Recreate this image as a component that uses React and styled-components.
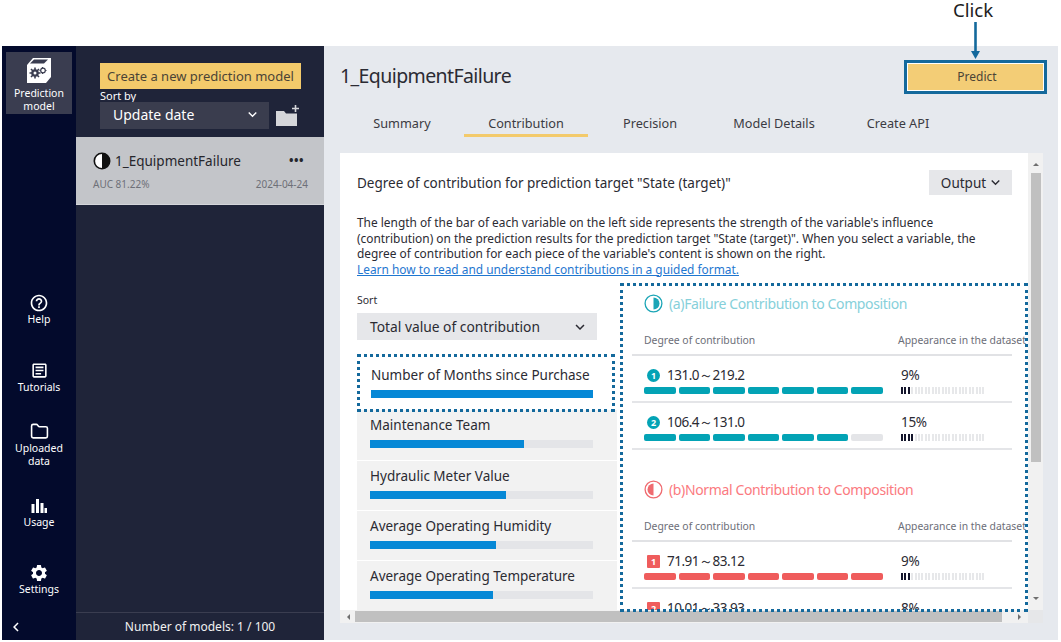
import React from 'react';
import styled, { createGlobalStyle } from 'styled-components';
import { MdHelpOutline, MdOutlineArticle, MdSettings, MdExpandMore, MdChevronLeft } from 'react-icons/md';
import { LuFolder } from 'react-icons/lu';

const Global = createGlobalStyle`
  html, body { margin: 0; padding: 0; background: #fff; }
  body { font-family: "Noto Sans", "Open Sans", sans-serif; color: #2b2b33; }
  * { box-sizing: border-box; }
`;

const Page = styled.div`
  position: relative;
  width: 1061px;
  height: 642px;
  padding: 46px 3px 2px 2px;
  overflow: hidden;
`;

const Shell = styled.div`
  display: flex;
  height: 100%;
`;

const Rail = styled.nav`
  width: 74px;
  flex: none;
  background: #030a2c;
  padding-top: 6px;
  display: flex;
  flex-direction: column;
  align-items: center;
`;

const RailItem = styled.div`
  width: 66px;
  display: flex;
  flex-direction: column;
  align-items: center;
  color: #fff;
  font-size: 10.5px;
  line-height: 13px;
  text-align: center;
  margin-top: ${p => p.$top || 0}px;
  background: ${p => (p.$active ? '#3a3d50' : 'transparent')};
  padding: ${p => (p.$active ? '5px 0 1px' : '0')};
  svg { display: block; }
`;

const RailIconGap = styled.span`
  display: block;
  margin-top: ${p => p.$gap || 0}px;
`;

const RailBack = styled.div`
  margin-top: auto;
  width: 100%;
  height: 26px;
  padding-left: 5px;
  color: #fff;
  display: flex;
  align-items: center;
`;

const Sidebar = styled.aside`
  width: 248px;
  flex: none;
  background: #1f2439;
  display: flex;
  flex-direction: column;
`;

const SideTop = styled.div`
  height: 91px;
  padding: 17px 0 0 24px;
`;

const CreateButton = styled.div`
  width: 201px;
  height: 26px;
  background: #f3ca6b;
  color: #4b4436;
  font-size: 13px;
  line-height: 26px;
  text-align: center;
`;

const SortLabel = styled.div`
  color: #fff;
  font-size: 11px;
  line-height: 13px;
`;

const SortRow = styled.div`
  display: flex;
  align-items: center;
  gap: 7px;
`;

const DarkSelect = styled.div`
  width: 169px;
  height: 27px;
  background: #3a3d4e;
  color: #fff;
  font-size: 14px;
  padding: 0 8px 2px 13px;
  display: flex;
  align-items: center;
  justify-content: space-between;
`;

const ModelCard = styled.div`
  height: 68px;
  background: #c3c5c9;
  padding: 13px 16px 0 17px;
  border-bottom: 1px solid #d4d6da;
`;

const ModelRow = styled.div`
  display: flex;
  align-items: center;
  justify-content: space-between;
  font-size: 13.5px;
  line-height: 22px;
  color: #26262c;
  padding-right: 4px;
`;

const ModelName = styled.div`
  display: flex;
  align-items: center;
  gap: 4px;
`;

const Dots = styled.div`
  font-weight: 700;
  font-size: 12px;
  letter-spacing: 0.5px;
  line-height: 14px;
`;

const ModelMeta = styled.div`
  display: flex;
  justify-content: space-between;
  font-size: 10px;
  color: #6e7078;
  margin-top: 5px;
`;

const SideSpace = styled.div`
  flex: 1;
`;

const SideFooter = styled.div`
  height: 28px;
  border-top: 1px solid #3a3d50;
  color: #f1f1f1;
  font-size: 12px;
  line-height: 27px;
  text-align: center;
`;

const Main = styled.main`
  flex: 1;
  background: #e6e9ee;
  padding: 0 0 0 16px;
  min-width: 0;
  display: flex;
  flex-direction: column;
`;

const MainHead = styled.div`
  height: 60px;
  display: flex;
  align-items: center;
  justify-content: space-between;
  padding-right: 11px;
`;

const Title = styled.h1`
  margin: 0 0 2px;
  font-size: 19.5px;
  letter-spacing: -0.6px;
  font-weight: 400;
  color: #2b2b33;
`;

const PredictButton = styled.div`
  width: 143px;
  height: 34px;
  margin-top: 1px;
  background: #f3cd76;
  border: 3px solid #14699c;
  box-shadow: inset 0 0 0 1px #fff;
  color: #4b4436;
  font-size: 12px;
  line-height: 28px;
  text-align: center;
  padding-left: 3px;
`;

const Tabs = styled.div`
  display: flex;
  height: 47px;
  padding-top: 8px;
`;

const Tab = styled.div`
  width: 124px;
  height: 23px;
  text-align: center;
  font-size: 12.7px;
  line-height: 19px;
  color: #3b3b42;
  border-bottom: 3px solid ${p => (p.$active ? '#f3ca6b' : 'transparent')};
`;

const Panel = styled.div`
  display: grid;
  grid-template-columns: 688px 15px;
  grid-template-rows: 457px 13px;
`;

const Content = styled.div`
  background: #fff;
  overflow: hidden;
  padding: 17px 16px 0 17px;
`;

const HeadRow = styled.div`
  display: flex;
  align-items: center;
  justify-content: space-between;
  height: 25px;
`;

const PanelTitle = styled.div`
  font-size: 13.5px;
  color: #2b2b33;
`;

const OutputButton = styled.div`
  width: 83px;
  height: 25px;
  background: #e6e7ea;
  font-size: 13.5px;
  display: flex;
  align-items: center;
  justify-content: center;
  padding-left: 4px;
  gap: 1px;
`;

const Lead = styled.p`
  margin: 20px 0 0;
  font-size: 11.9px;
  line-height: 15.6px;
  color: #2b2b33;
  white-space: nowrap;
`;

const GuideLink = styled.a`
  color: #1f77d0;
  text-decoration: underline;
`;

const Columns = styled.div`
  display: flex;
  margin-top: 8px;
`;

const LeftCol = styled.div`
  width: 260px;
  flex: none;
`;

const FieldLabel = styled.div`
  font-size: 10.5px;
  line-height: 14px;
  padding-top: 8px;
  margin-bottom: 6px;
`;

const LightSelect = styled.div`
  width: 240px;
  height: 27px;
  background: #e6e7ea;
  font-size: 13.8px;
  padding: 0 8px 0 13px;
  display: flex;
  align-items: center;
  justify-content: space-between;
`;

const VarList = styled.div`
  margin-top: 15px;
`;

const VarItem = styled.div`
  height: ${p => (p.$active ? 55 : 49.2)}px;
  padding: ${p => (p.$active ? '10px 24px 0 14px' : '5px 24px 0 13px')};
  background: ${p => (p.$active ? '#fff' : '#f2f2f2')};
  margin-bottom: ${p => (p.$active ? 0 : 1)}px;
  font-size: 13.5px;
  line-height: 20px;
  white-space: nowrap;
  color: #2b2b33;
`;

const VarTrack = styled.div`
  height: 8px;
  background: #e4e5e8;
  margin-top: 5px;
`;

const VarFill = styled.div`
  height: 100%;
  background: #0688d6;
`;

const RightCol = styled.div`
  flex: 1;
  min-width: 0;
  padding: 8px 0 0 15px;
`;

const Section = styled.section`
  margin-bottom: 29px;
`;

const SectionTitle = styled.div`
  display: flex;
  align-items: center;
  gap: 6px;
  padding-left: 12px;
  height: 20px;
  font-size: 14px;
  letter-spacing: -0.37px;
  color: ${p => p.$color};
`;

const TableHead = styled.div`
  display: flex;
  padding: 0 0 0 12px;
  margin-top: 20px;
  height: 23px;
  font-size: 10.4px;
  line-height: 14px;
  color: #6c6e78;
  white-space: nowrap;
  border-bottom: 2px solid #e1e2e5;
  width: 380px;
`;

const HeadA = styled.div`
  width: 254px;
  flex: none;
`;

const DataRow = styled.div`
  display: flex;
  height: 47px;
  padding: 9px 0 0 12px;
  border-bottom: 2px solid #e4e5e8;
  width: 380px;
`;

const RangeCell = styled.div`
  width: 257px;
  flex: none;
`;

const RangeLabel = styled.div`
  display: flex;
  align-items: center;
  gap: 7px;
  padding-left: 3px;
  height: 20px;
  font-size: 13.5px;
  letter-spacing: -0.5px;
  color: #2b2b33;
`;

const Badge = styled.span`
  width: 13px;
  height: 13px;
  flex: none;
  border-radius: ${p => (p.$square ? '1px' : '50%')};
  background: ${p => p.$color};
  color: #fff;
  font-size: 9px;
  font-weight: 700;
  letter-spacing: 0;
  line-height: 13px;
  text-align: center;
`;

const Segments = styled.div`
  display: grid;
  grid-template-columns: repeat(7, 1fr);
  gap: 3px;
  width: 239px;
  margin-top: 2px;
`;

const Segment = styled.div`
  height: 7px;
  border-radius: 2px;
  background: ${p => (p.$on ? p.$color : '#e4e5e8')};
`;

const ShareCell = styled.div`
  font-size: 13.5px;
  line-height: 20px;
  letter-spacing: -0.3px;
  color: #2b2b33;
`;

const Ticks = styled.div`
  display: flex;
  gap: 1.4px;
  width: 84px;
  margin-top: 2px;
`;

const Tick = styled.span`
  width: 2px;
  height: 7px;
  background: ${p => (p.$on ? '#14162c' : '#e7e8ea')};
`;

const VBar = styled.div`
  background: #f1f1f1;
  display: flex;
  flex-direction: column;
  align-items: center;
  padding: 7px 2px 7px 3px;
`;

const HBar = styled.div`
  background: #f1f1f1;
  display: flex;
  align-items: center;
  padding: 1px 0 1px 4px;
`;

const Corner = styled.div`
  background: #e6e7e9;
`;

const ThumbV = styled.div`
  width: 100%;
  height: 289px;
  margin: 7px 0 auto;
  background: #c0c0c0;
`;

const ThumbH = styled.div`
  flex: 1;
  height: 100%;
  background: #c0c0c0;
`;

const Arrow = styled.div`
  width: 0;
  height: 0;
  flex: none;
  border: 3px solid transparent;
  border-${p => p.$side}-color: #6f6f6f;
  margin: ${p => p.$m || 0};
`;

const ClickNote = styled.div`
  position: absolute;
  left: 953px;
  top: 0;
  font-size: 18.6px;
  line-height: 20px;
  color: #1c1c22;
`;

const ClickArrow = styled.svg`
  position: absolute;
  left: 970px;
  top: 22px;
`;

const DottedFrame = styled.div`
  position: absolute;
  left: ${p => p.$x}px;
  top: ${p => p.$y}px;
  width: ${p => p.$w}px;
  height: ${p => p.$h}px;
  border: 3px dotted #14699c;
  pointer-events: none;
`;

const Contrast = ({ size = 18 }) => (
  <svg width={size} height={size} viewBox="0 0 18 18">
    <circle cx="9" cy="9" r="7.700" fill="#fff" stroke="#111" strokeWidth="1.600" />
    <path d="M9 1.300a7.700 7.700 0 0 1 0 15.400z" fill="#111" />
  </svg>
);

const HalfDial = ({ color, side }) => (
  <svg width="19" height="19" viewBox="0 0 19 19">
    <circle cx="9.500" cy="9.500" r="8.400" fill="none" stroke={color} strokeWidth="1.300" />
    <path
      d={side === 'right' ? 'M9.500 3.500a6 6 0 0 1 0 12z' : 'M9.500 3.500a6 6 0 0 0 0 12z'}
      fill={color}
    />
  </svg>
);

const ModelIcon = () => (
  <svg width="26" height="27" viewBox="0 0 26 27">
    <path d="M1 8 7 1h18v19l-5 6H1z" fill="#fff" />
    <path d="M4 6.500 8 2.500h14L18 6.500z" fill="#3a3d50" />
    <path d="M9 10.500v11M3.500 16h11M5 12l8 8M13 12l-8 8" stroke="#3a3d50" strokeWidth="1.600" />
    <circle cx="9" cy="16" r="3.800" fill="#3a3d50" />
    <circle cx="9" cy="16" r="1.500" fill="#fff" />
    <path d="M16.500 10v7M13.500 13.500h7" stroke="#3a3d50" strokeWidth="1.200" />
    <circle cx="17" cy="13.500" r="2.300" fill="#fff" stroke="#3a3d50" strokeWidth="1.200" />
  </svg>
);

const FolderPlus = () => (
  <svg width="24" height="22" viewBox="0 0 24 22">
    <path d="M0 6h8l2 2.500h11V21H0z" fill="#d5d6da" />
    <path d="M19.500 0v7M16 3.500h7" stroke="#d5d6da" strokeWidth="1.600" />
  </svg>
);

const UsageIcon = () => (
  <svg width="20" height="20" viewBox="0 0 20 20" fill="#fff">
    <rect x="2.500" y="8" width="3" height="9" />
    <rect x="7" y="3" width="3" height="14" />
    <rect x="11.500" y="7" width="3" height="10" />
    <rect x="15.500" y="12" width="2.500" height="5" />
  </svg>
);

const VARIABLES = [
  { name: 'Number of Months since Purchase', pct: 100, active: true },
  { name: 'Maintenance Team', pct: 69 },
  { name: 'Hydraulic Meter Value', pct: 61 },
  { name: 'Average Operating Humidity', pct: 56.5 },
  { name: 'Average Operating Temperature', pct: 55 },
];

const SECTIONS = [
  {
    title: '(a)Failure Contribution to Composition',
    titleColor: '#86d0da',
    dial: '#1ba5b6',
    side: 'right',
    bar: '#03a3b5',
    rows: [
      { n: 1, range: '131.0～219.2', on: 7, share: '9%', ticks: 3 },
      { n: 2, range: '106.4～131.0', on: 6, share: '15%', ticks: 4 },
    ],
  },
  {
    title: '(b)Normal Contribution to Composition',
    titleColor: '#fb7a80',
    dial: '#ef6b70',
    side: 'left',
    square: true,
    bar: '#ef5c5c',
    rows: [
      { n: 1, range: '71.91～83.12', on: 7, share: '9%', ticks: 3 },
      { n: 2, range: '10.01～33.93', on: 7, share: '8%', ticks: 3 },
    ],
  },
];

export default function App() {
  return (
    <Page>
      <Global />
      <Shell>
        <Rail>
          <RailItem $active>
            <ModelIcon />
            <RailIconGap $gap={3}>Prediction<br />model</RailIconGap>
          </RailItem>
          <RailItem $top={179}><MdHelpOutline size={20} /><span>Help</span></RailItem>
          <RailItem $top={35}><MdOutlineArticle size={19} /><RailIconGap $gap={1}>Tutorials</RailIconGap></RailItem>
          <RailItem $top={28}><LuFolder size={19} /><RailIconGap $gap={1}>Uploaded<br />data</RailIconGap></RailItem>
          <RailItem $top={28}><UsageIcon /><span>Usage</span></RailItem>
          <RailItem $top={34}><MdSettings size={20} /><span>Settings</span></RailItem>
          <RailBack><MdChevronLeft size={18} /></RailBack>
        </Rail>

        <Sidebar>
          <SideTop>
            <CreateButton>Create a new prediction model</CreateButton>
            <SortLabel>Sort by</SortLabel>
            <SortRow>
              <DarkSelect>Update date<MdExpandMore size={17} /></DarkSelect>
              <FolderPlus />
            </SortRow>
          </SideTop>
          <ModelCard>
            <ModelRow>
              <ModelName><Contrast />1_EquipmentFailure</ModelName>
              <Dots>•••</Dots>
            </ModelRow>
            <ModelMeta><span>AUC 81.22%</span><span>2024-04-24</span></ModelMeta>
          </ModelCard>
          <SideSpace />
          <SideFooter>Number of models: 1 / 100</SideFooter>
        </Sidebar>

        <Main>
          <MainHead>
            <Title>1_EquipmentFailure</Title>
            <PredictButton>Predict</PredictButton>
          </MainHead>
          <Tabs>
            <Tab>Summary</Tab>
            <Tab $active>Contribution</Tab>
            <Tab>Precision</Tab>
            <Tab>Model Details</Tab>
            <Tab>Create API</Tab>
          </Tabs>
          <Panel>
            <Content>
              <HeadRow>
                <PanelTitle>Degree of contribution for prediction target "State (target)"</PanelTitle>
                <OutputButton>Output<MdExpandMore size={17} /></OutputButton>
              </HeadRow>
              <Lead>
                The length of the bar of each variable on the left side represents the strength of the variable's influence<br />
                (contribution) on the prediction results for the prediction target "State (target)". When you select a variable, the<br />
                degree of contribution for each piece of the variable's content is shown on the right.<br />
                <GuideLink>Learn how to read and understand contributions in a guided format.</GuideLink>
              </Lead>
              <Columns>
                <LeftCol>
                  <FieldLabel>Sort</FieldLabel>
                  <LightSelect>Total value of contribution<MdExpandMore size={18} /></LightSelect>
                  <VarList>
                    {VARIABLES.map(v => (
                      <VarItem key={v.name} $active={v.active}>
                        {v.name}
                        <VarTrack><VarFill style={{ width: `${v.pct}%` }} /></VarTrack>
                      </VarItem>
                    ))}
                  </VarList>
                </LeftCol>
                <RightCol>
                  {SECTIONS.map(s => (
                    <Section key={s.title}>
                      <SectionTitle $color={s.titleColor}>
                        <HalfDial color={s.dial} side={s.side} />
                        {s.title}
                      </SectionTitle>
                      <TableHead>
                        <HeadA>Degree of contribution</HeadA>
                        <div>Appearance in the dataset</div>
                      </TableHead>
                      {s.rows.map(r => (
                        <DataRow key={r.n}>
                          <RangeCell>
                            <RangeLabel>
                              <Badge $color={s.bar} $square={s.square}>{r.n}</Badge>
                              {r.range}
                            </RangeLabel>
                            <Segments>
                              {Array.from({ length: 7 }, (_, i) => (
                                <Segment key={i} $on={i < r.on} $color={s.bar} />
                              ))}
                            </Segments>
                          </RangeCell>
                          <ShareCell>
                            {r.share}
                            <Ticks>
                              {Array.from({ length: 25 }, (_, i) => (
                                <Tick key={i} $on={i < r.ticks} />
                              ))}
                            </Ticks>
                          </ShareCell>
                        </DataRow>
                      ))}
                    </Section>
                  ))}
                </RightCol>
              </Columns>
            </Content>
            <VBar>
              <Arrow $side="bottom" />
              <ThumbV />
              <Arrow $side="top" />
            </VBar>
            <HBar>
              <Arrow $side="right" $m="0 5px 0 0" />
              <ThumbH />
              <Arrow $side="left" $m="0 4px 0 16px" />
            </HBar>
            <Corner />
          </Panel>
        </Main>
      </Shell>

      <ClickNote>Click</ClickNote>
      <ClickArrow width="11" height="38" viewBox="0 0 11 38">
        <path d="M5.500 0v30" stroke="#14699c" strokeWidth="2.600" />
        <path d="M1 29h9l-4.500 8z" fill="#14699c" />
      </ClickArrow>
      <DottedFrame $x={357} $y={354} $w={258} $h={58} />
      <DottedFrame $x={620} $y={283} $w={408} $h={329} />
    </Page>
  );
}
